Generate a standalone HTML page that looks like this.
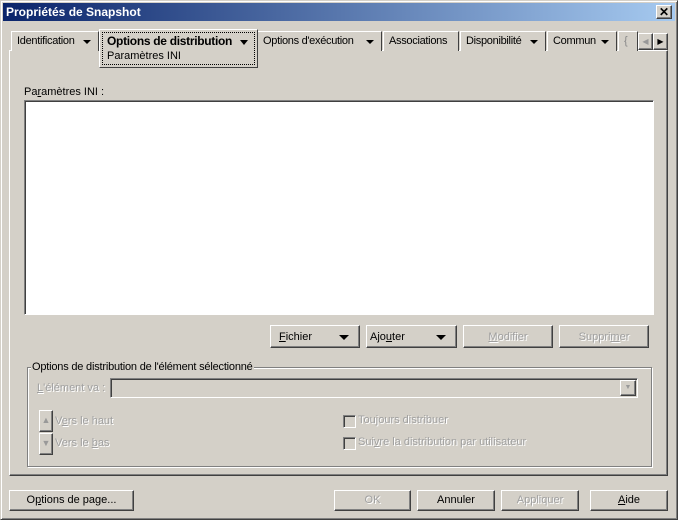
<html><head><style>
body{margin:0;width:678px;height:520px;background:#d4d0c8;font:11px "Liberation Sans",sans-serif;position:relative;overflow:hidden}
div,span{position:absolute;box-sizing:border-box}
.r{border:1px solid;border-color:#fff #404040 #404040 #fff;box-shadow:inset -1px -1px #808080}
.s{border:1px solid;border-color:#808080 #fff #fff #808080;box-shadow:inset 1px 1px #404040}
.b{background:#d4d0c8;text-align:center;line-height:19px;color:#000}
.d{color:#a0a0a0;text-shadow:1px 1px #fff}
.tab{top:31px;height:20px;border:1px solid;border-color:#fff #404040 transparent #fff;border-bottom:none;line-height:19px;padding-left:5px;white-space:nowrap;background:#d4d0c8;letter-spacing:-0.3px}
.ar{width:0;height:0;border-left:4px solid transparent;border-right:4px solid transparent;border-top:4px solid #000;top:8px;right:7px}
u{text-decoration:underline}
</style></head><body>
<div style="left:0;top:0;width:678px;height:520px;border:1px solid;border-color:#d4d0c8 #404040 #404040 #d4d0c8;box-shadow:inset 1px 1px #fff,inset -1px -1px #808080"></div>
<div style="left:3px;top:3px;width:672px;height:18px;background:linear-gradient(90deg,#0a246a,#a6caf0);color:#fff;font-weight:bold;font-size:12px;line-height:18px;padding-left:3px">Propriétés de Snapshot</div>
<div class="r b" style="left:656px;top:5px;width:16px;height:14px;line-height:12px;font-size:12px;font-weight:bold">✕</div>
<div class="r" style="left:9px;top:50px;width:659px;height:426px;box-shadow:inset -1px -1px #808080"></div>
<div class="tab" style="left:11px;width:88px">Identification<span class="ar"></span></div>
<div class="tab" style="left:257px;width:125px">Options d'exécution<span class="ar"></span></div>
<div class="tab" style="left:383px;width:76px">Associations</div>
<div class="tab" style="left:460px;width:86px">Disponibilité<span class="ar"></span></div>
<div class="tab" style="left:547px;width:70px">Commun<span class="ar"></span></div>
<div class="tab" style="left:618px;width:20px;color:#888">{</div>
<div style="left:99px;top:29px;width:159px;height:39px;background:#d4d0c8;border:1px solid;border-color:#fff #404040 #404040 #fff"></div>
<div style="left:102px;top:32px;width:153px;height:33px;border:1px dotted #000"></div>
<span style="left:107px;top:34px;font-weight:bold;font-size:12px;letter-spacing:-0.3px">Options de distribution</span>
<span class="ar" style="left:240px;top:40px;border-width:5px 4px 0"></span>
<span style="left:107px;top:50px">Paramètres INI</span>
<div class="r b" style="left:638px;top:33px;width:15px;height:17px;color:#999;font-size:8px;line-height:15px">◀</div>
<div class="r b" style="left:653px;top:33px;width:15px;height:17px;font-size:8px;line-height:15px">▶</div>
<span style="left:24px;top:86px">Pa<u>r</u>amètres INI :</span>
<div class="s" style="left:24px;top:100px;width:630px;height:215px;background:#fff"></div>
<div class="r b" style="left:270px;top:325px;width:90px;height:23px;text-align:left;padding-left:8px;line-height:22px"><u>F</u>ichier<span class="ar" style="top:9px;right:10px;border-width:5px 5px 0"></span></div>
<div class="r b" style="left:366px;top:325px;width:91px;height:23px;text-align:left;padding-left:3px;line-height:22px">Ajo<u>u</u>ter<span class="ar" style="top:9px;right:10px;border-width:5px 5px 0"></span></div>
<div class="r b d" style="left:463px;top:325px;width:90px;height:23px;line-height:22px"><u>M</u>odifier</div>
<div class="r b d" style="left:559px;top:325px;width:90px;height:23px;line-height:22px">Suppri<u>m</u>er</div>
<div style="left:27px;top:367px;width:625px;height:100px;border:1px solid #808080;box-shadow:1px 1px #fff,inset 1px 1px #fff"></div>
<span style="left:31px;top:361px;background:#d4d0c8;padding:0 1px;letter-spacing:-0.2px">Options de distribution de l'élément sélectionné</span>
<span class="d" style="left:37px;top:382px"><u>L</u>'élément va :</span>
<div class="s" style="left:110px;top:378px;width:528px;height:20px"></div>
<div class="r b" style="left:620px;top:380px;width:16px;height:16px;font-size:7px;line-height:14px;color:#999">▼</div>
<div class="r b" style="left:39px;top:410px;width:14px;height:22px;font-size:9px;color:#999;line-height:18px">▲</div>
<span class="d" style="left:55px;top:415px">V<u>e</u>rs le haut</span>
<div class="r b" style="left:39px;top:433px;width:14px;height:22px;font-size:9px;color:#999;line-height:18px">▼</div>
<span class="d" style="left:55px;top:437px">Vers le <u>b</u>as</span>
<div class="s" style="left:343px;top:415px;width:13px;height:13px;background:#d4d0c8"></div>
<span class="d" style="left:358px;top:414px">Tou<u>j</u>ours distribuer</span>
<div class="s" style="left:343px;top:437px;width:13px;height:13px;background:#d4d0c8"></div>
<span class="d" style="left:358px;top:436px">Sui<u>v</u>re la distribution par utilisateur</span>
<div class="r b" style="left:9px;top:490px;width:125px;height:21px">O<u>p</u>tions de page...</div>
<div class="r b d" style="left:334px;top:490px;width:77px;height:21px">OK</div>
<div class="r b" style="left:417px;top:490px;width:78px;height:21px">Annuler</div>
<div class="r b d" style="left:501px;top:490px;width:78px;height:21px">Appliquer</div>
<div class="r b" style="left:590px;top:490px;width:78px;height:21px"><u>A</u>ide</div>
</body></html>
